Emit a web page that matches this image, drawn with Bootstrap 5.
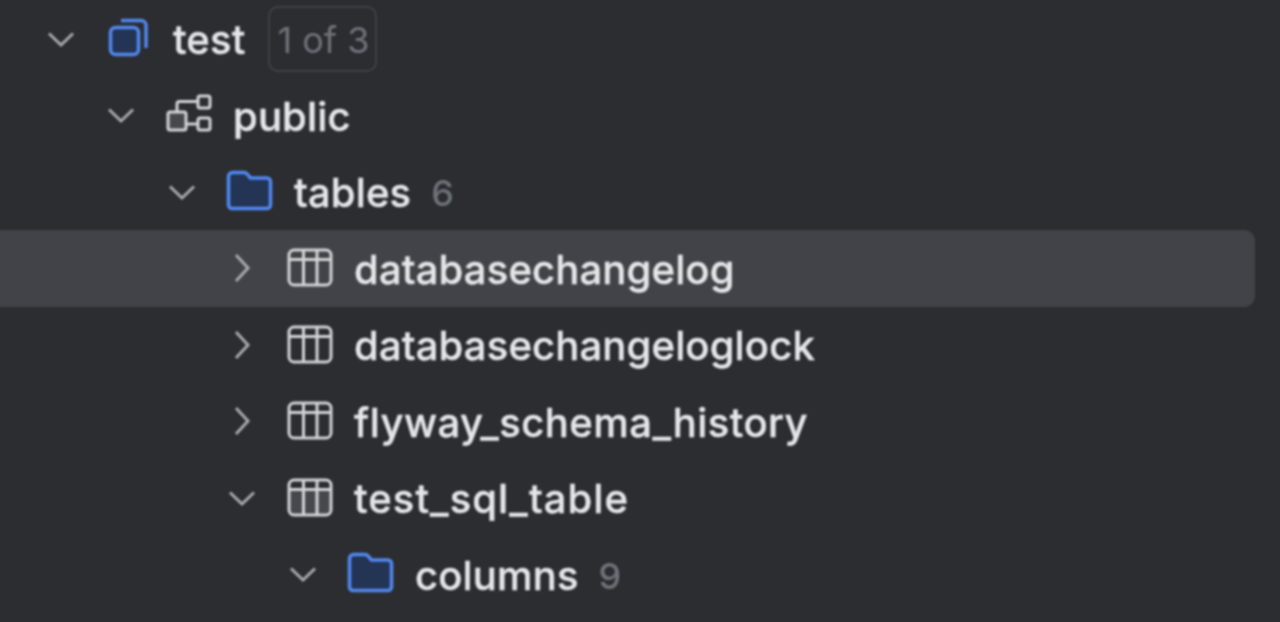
<!DOCTYPE html>
<html lang="en">
<head>
  <meta charset="UTF-8">
  <meta name="viewport" content="width=device-width, initial-scale=1">
  <title>Database tree</title>
  <link href="https://cdn.jsdelivr.net/npm/bootstrap@5.3.0/dist/css/bootstrap.min.css" rel="stylesheet">
  <style>
    html, body {
      height: 100%;
      overflow: hidden;
      background-color: #2b2d30;
    }
    /* starts 6px off the left edge so the blur doesn't fade the hover row at x=0 */
    .db-tree {
      margin-left: -6px;
      padding-top: 0.5px;
      font-family: "Inter", "Liberation Sans", sans-serif;
      font-size: 40px;
      font-weight: 500;
      color: #e4e6ea;
      filter: blur(0.9px);
    }
    .tree-row {
      height: 76.5px;
      width: 1261px;
      border-radius: 0 11px 11px 0;
    }
    .tree-row.is-hover { background-color: #424348; }
    .lvl-0 { padding-left: 52px; }
    .lvl-1 { padding-left: 112px; }
    .lvl-2 { padding-left: 173px; }
    .lvl-3 { padding-left: 233px; }
    .lvl-4 { padding-left: 294px; }
    .tw { width: 30px; height: 30px; margin-right: 29px; flex: none; }
    .node-ico { width: 48px; height: 48px; margin-right: 20px; flex: none; }
    .node-name { line-height: 1; letter-spacing: 0.15px; padding-top: 3px; -webkit-text-stroke: 0.4px #e4e6ea; }
    .name-wide { letter-spacing: 0.45px; }
    .name-wider { letter-spacing: 1.05px; }
    .node-count { margin-left: 20px; padding-top: 3px; font-size: 36px; color: #6f737a; line-height: 1; }
    .of-badge {
      margin-left: 23px;
      padding: 2px 5px 0 7px;
      height: 66px;
      font-size: 36px;
      font-weight: 400;
      color: #6f737a;
      border: 2px solid #404246;
      border-radius: 10px;
    }
  </style>
</head>
<body>

<svg width="0" height="0" class="position-absolute">
  <symbol id="i-down" viewBox="0 0 30 30"><path d="M3 9.500 15 21 27 9.500" fill="none" stroke="#a8aaaf" stroke-width="3"/></symbol>
  <symbol id="i-right" viewBox="0 0 30 30"><path d="M9 2 21 15 9 28" fill="none" stroke="#a8aaaf" stroke-width="3"/></symbol>
  <symbol id="i-stack" viewBox="0 0 48 48">
    <rect x="5.500" y="12.500" width="28" height="27" rx="5" fill="#233454" stroke="#5288f0" stroke-width="3.500"/>
    <path d="M16 5.500h20a5 5 0 0 1 5 5V33" fill="none" stroke="#5288f0" stroke-width="3.500"/>
  </symbol>
  <symbol id="i-schema" viewBox="0 0 48 48" fill="none" stroke="#d2d4d8" stroke-width="3">
    <rect x="3" y="21" width="18" height="18" rx="2" fill="#47484d"/>
    <rect x="33" y="5" width="12" height="12" rx="2"/>
    <rect x="33" y="27" width="12" height="12" rx="2"/>
    <path d="M12 21v-8a2.500 2.500 0 0 1 2.500-2.500H33M21 33h12"/>
  </symbol>
  <symbol id="i-folder" viewBox="0 0 48 48">
    <path d="M6.500 4.500H18a4 4 0 0 1 3 1.400l3.500 4.100H41a3.500 3.500 0 0 1 3.500 3.500V37a3.500 3.500 0 0 1-3.500 3.500H6A3.500 3.500 0 0 1 2.500 37V8.500a4 4 0 0 1 4-4z" fill="#233454" stroke="#5288f0" stroke-width="3.500" stroke-linejoin="round"/>
  </symbol>
  <symbol id="i-table" viewBox="0 0 48 48" fill="none" stroke="#d2d4d8" stroke-width="3">
    <rect x="3" y="6" width="42" height="35" rx="5"/>
    <path d="M3 15.500h42M17.500 6v35M31 6v35"/>
  </symbol>
  <symbol id="i-table-open" viewBox="0 0 48 48" fill="none" stroke="#d2d4d8" stroke-width="3">
    <rect x="3" y="15.500" width="42" height="25" fill="#47484d" stroke="none"/>
    <rect x="3" y="6" width="42" height="35" rx="5"/>
    <path d="M3 15.500h42M17.500 6v35M31 6v35"/>
  </symbol>
</svg>

<div class="db-tree">
  <div class="tree-row lvl-0 d-flex align-items-center">
    <svg class="tw"><use href="#i-down"/></svg>
    <svg class="node-ico"><use href="#i-stack"/></svg>
    <span class="node-name">test</span>
    <span class="of-badge d-flex align-items-center">1 of 3</span>
  </div>
  <div class="tree-row lvl-1 d-flex align-items-center">
    <svg class="tw"><use href="#i-down"/></svg>
    <svg class="node-ico"><use href="#i-schema"/></svg>
    <span class="node-name">public</span>
  </div>
  <div class="tree-row lvl-2 d-flex align-items-center">
    <svg class="tw"><use href="#i-down"/></svg>
    <svg class="node-ico"><use href="#i-folder"/></svg>
    <span class="node-name">tables</span>
    <span class="node-count">6</span>
  </div>
  <div class="tree-row is-hover lvl-3 d-flex align-items-center">
    <svg class="tw"><use href="#i-right"/></svg>
    <svg class="node-ico"><use href="#i-table"/></svg>
    <span class="node-name">databasechangelog</span>
  </div>
  <div class="tree-row lvl-3 d-flex align-items-center">
    <svg class="tw"><use href="#i-right"/></svg>
    <svg class="node-ico"><use href="#i-table"/></svg>
    <span class="node-name">databasechangeloglock</span>
  </div>
  <div class="tree-row lvl-3 d-flex align-items-center">
    <svg class="tw"><use href="#i-right"/></svg>
    <svg class="node-ico"><use href="#i-table"/></svg>
    <span class="node-name name-wide">flyway_schema_history</span>
  </div>
  <div class="tree-row lvl-3 d-flex align-items-center">
    <svg class="tw"><use href="#i-down"/></svg>
    <svg class="node-ico"><use href="#i-table-open"/></svg>
    <span class="node-name name-wider">test_sql_table</span>
  </div>
  <div class="tree-row lvl-4 d-flex align-items-center">
    <svg class="tw"><use href="#i-down"/></svg>
    <svg class="node-ico"><use href="#i-folder"/></svg>
    <span class="node-name">columns</span>
    <span class="node-count">9</span>
  </div>
</div>

<script src="https://cdn.jsdelivr.net/npm/bootstrap@5.3.0/dist/js/bootstrap.bundle.min.js"></script>
</body>
</html>
